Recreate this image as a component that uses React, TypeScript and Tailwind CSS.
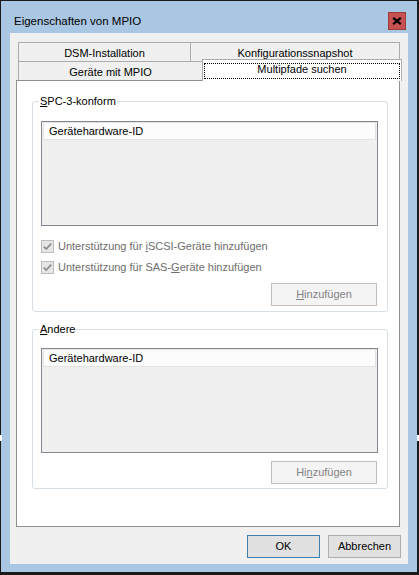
import React from "react";

function Check({ children }: { children: React.ReactNode }) {
  return (
    <div className="flex items-center h-[13px]">
      <div className="w-[13px] h-[13px] border border-[#bcbcbc] bg-[#e6e6e6] flex items-center justify-center shrink-0">
        <svg width="11" height="11" viewBox="0 0 11 11">
          <path d="M1.8 5.6 L4.2 8 L9.2 2.6" fill="none" stroke="#8c8c8c" strokeWidth="1.7" />
        </svg>
      </div>
      <span className="ml-[4px] text-[#6d6d6d] leading-[13px] whitespace-nowrap">{children}</span>
    </div>
  );
}

function ListBox() {
  return (
    <div className="ml-[8px] mr-[9px] h-[105px] border border-[#828790] bg-[#f0f0f0] px-[1px]">
      <div className="h-[18px] border border-[#e3e3e3] bg-[#fcfcfc] pl-[5px] flex items-center leading-[13px] text-black">
        Gerätehardware-ID
      </div>
    </div>
  );
}

function DisabledButton({ children }: { children: React.ReactNode }) {
  return (
    <div className="flex justify-end pr-[10px]">
      <div className="w-[106px] h-[23px] border border-[#bfbfbf] bg-[#f4f4f4] text-[#838383] flex items-center justify-center leading-[13px]">
        {children}
      </div>
    </div>
  );
}

export default function App() {
  return (
    <div className="relative w-[419px] h-[575px] bg-[#1a1a1a] pt-[1px] pl-[1px] pr-[2px] pb-[3px] font-['Liberation_Sans',Arial,sans-serif] text-[11px] text-black select-none">
      <div className="absolute left-0 top-[435px] w-[2px] h-[6px] bg-white" />
      <div className="absolute right-0 top-[435px] w-[2px] h-[6px] bg-white" />
      <div className="w-full h-full bg-[#a9c6e3] flex flex-col">
        {/* Title bar */}
        <div className="h-[32px] flex items-start justify-between pl-[13px] pr-[11px] shrink-0">
          <div className="mt-[14px] leading-[13px] text-[11.5px]">Eigenschaften von MPIO</div>
          <div className="mt-[11px] w-[18px] h-[18px] bg-[#c75050] border border-[#9a3c38] flex items-center justify-center">
            <svg width="10" height="8" viewBox="0 0 10 8">
              <path d="M1.2 0.8 L8.8 7.2 M8.8 0.8 L1.2 7.2" stroke="#000" strokeWidth="2.2" fill="none" />
            </svg>
          </div>
        </div>
        {/* Client */}
        <div className="flex-1 ml-[9px] mr-[9px] mb-[8px] bg-[#f0f0f0] pt-[9px] pl-[6px] flex flex-col">
          {/* Tabs */}
          <div className="relative w-[384px] h-[38px] shrink-0">
            <div className="flex ml-[2px] h-[19px]">
              <div className="w-[173px] h-[19px] border-t border-l border-r border-[#acacac] bg-[#f0f0f0] flex items-center justify-center pt-[2px] leading-[13px]">
                DSM-Installation
              </div>
              <div className="-ml-px w-[210px] h-[19px] border-t border-r border-l border-[#acacac] bg-[#f0f0f0] flex items-center justify-center pt-[2px] leading-[13px]">
                Konfigurationssnapshot
              </div>
            </div>
            <div className="flex ml-[2px] h-[19px]">
              <div className="w-[185px] h-[19px] border-t border-l border-r border-[#acacac] bg-[#f0f0f0] flex items-center justify-center pt-[2px] leading-[13px]">
                Geräte mit MPIO
              </div>
            </div>
            <div className="absolute z-10 left-[186px] top-[17px] w-[200px] h-[22px] border-t border-l border-r border-[#acacac] bg-white flex items-center justify-center leading-[13px]">
              <div className="absolute left-[1px] right-[1px] top-[3px] bottom-[2px] border border-dotted border-black" />
              <span className="relative -mt-[2px]">Multipfade suchen</span>
            </div>
          </div>
          {/* Panel */}
          <div className="w-[384px] h-[447px] border border-[#8f8f8f] bg-white shrink-0">
            <fieldset className="mt-[14px] ml-[15px] mr-[11px] border border-[#d5dfe5] rounded-[3px] pb-[5px]">
              <legend className="ml-[6px] px-[1px] leading-[13px]">
                <u className="underline-offset-[1px]">S</u>PC-3-konform
              </legend>
              <div className="mt-[13px]">
                <ListBox />
              </div>
              <div className="ml-[8px] mt-[14px]">
                <Check>
                  Unterstützung für <u>i</u>SCSI-Geräte hinzufügen
                </Check>
              </div>
              <div className="ml-[8px] mt-[8px]">
                <Check>
                  Unterstützung für SAS-<u>G</u>eräte hinzufügen
                </Check>
              </div>
              <div className="mt-[9px]">
                <DisabledButton>
                  <span>
                    <u>H</u>inzufügen
                  </span>
                </DisabledButton>
              </div>
            </fieldset>
            <fieldset className="mt-[11px] ml-[15px] mr-[11px] border border-[#d5dfe5] rounded-[3px] pb-[4px]">
              <legend className="ml-[6px] px-[1px] leading-[13px]">
                <u>A</u>ndere
              </legend>
              <div className="mt-[12px]">
                <ListBox />
              </div>
              <div className="mt-[8px]">
                <DisabledButton>
                  <span>
                    Hi<u>n</u>zufügen
                  </span>
                </DisabledButton>
              </div>
            </fieldset>
          </div>
          {/* Bottom buttons */}
          <div className="flex justify-end gap-[8px] pr-[7px] mt-[8px]">
            <div className="w-[73px] h-[23px] border border-[#3c7fb1] bg-[#e1e1e1] flex items-center justify-center leading-[13px]">
              OK
            </div>
            <div className="w-[73px] h-[23px] border border-[#adadad] bg-[#e1e1e1] flex items-center justify-center leading-[13px]">
              Abbrechen
            </div>
          </div>
        </div>
      </div>
    </div>
  );
}
